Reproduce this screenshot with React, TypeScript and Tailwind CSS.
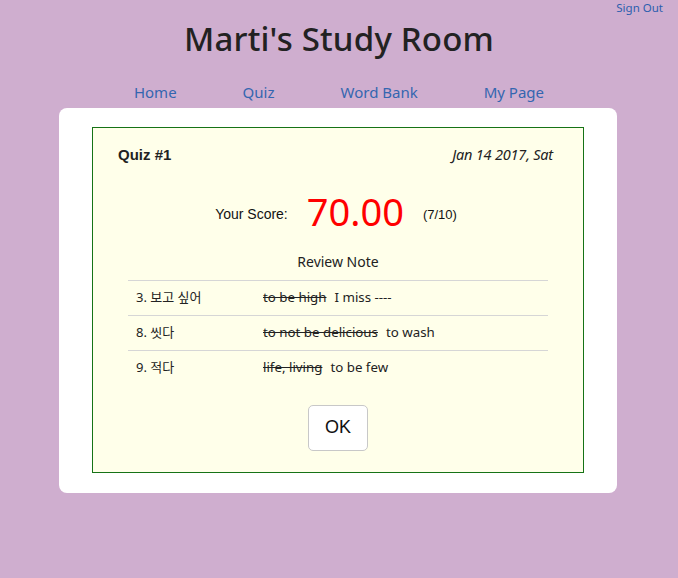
const NOTES = [
  { q: '3. 보고 싶어', wrong: 'to be high', right: 'I miss ----' },
  { q: '8. 씻다', wrong: 'to not be delicious', right: 'to wash' },
  { q: '9. 적다', wrong: 'life, living', right: 'to be few' },
];

const NAV = ['Home', 'Quiz', 'Word Bank', 'My Page'];

export default function App() {
  return (
    <div className="min-h-[578px] bg-[#cfaecf] font-['Noto_Sans',sans-serif]">
      <div className="flex justify-end pr-[15px] h-[20px]">
        <a className="text-[11.5px] leading-[16px] text-[#2c5eae]">Sign Out</a>
      </div>

      <h1 className="text-center text-[33px] leading-[40px] font-medium text-[#222] mt-[-1px] tracking-[0.2px]">
        Marti's Study Room
      </h1>

      <nav className="flex justify-center mt-[22px] h-[24px] text-[15px] text-[#3466b0]">
        {NAV.map(n => <a key={n} className="mx-[33px]">{n}</a>)}
      </nav>

      <div className="mx-[59px] w-[558px] mt-[3px] bg-white rounded-[8px] pt-[19px] pb-[20px] px-[33px]">
        <div className="border border-[#167316] bg-[#ffffea] px-[35px] pt-[16px] pb-[21px]">
          <div className="flex justify-between items-center ml-[-10px] mr-[-5px]">
            <span className="text-[15px] font-bold text-[#222] font-['Liberation_Sans',sans-serif]">Quiz #1</span>
            <span className="text-[14.5px] text-[#222] italic tracking-[-0.2px]">Jan 14 2017, Sat</span>
          </div>

          <div className="flex justify-center items-center mt-[22px] ml-[-4px] font-['Liberation_Sans',sans-serif] text-[#111]">
            <span className="text-[14px] mt-[8px]">Your Score:</span>
            <span className="text-[38px] text-[#ff0000] font-['Noto_Sans',sans-serif] mx-[19px] leading-[44px]">70.00</span>
            <span className="text-[13px] mt-[8px]">(7/10)</span>
          </div>

          <div className="text-center text-[14px] text-[#222] mt-[18px]">Review Note</div>

          <div className="mt-[8px]">
            {NOTES.map(n => (
              <div key={n.q} className="flex items-center h-[35px] border-t border-[#d6d6d6] text-[13.3px] text-[#222]">
                <span className="w-[135px] pl-[8px] text-[13px] font-['Noto_Sans','Noto_Sans_CJK_KR',sans-serif]">{n.q}</span>
                <span className="line-through">{n.wrong}</span>
                <span className="ml-[8px]">{n.right}</span>
              </div>
            ))}
          </div>

          <div className="flex justify-center mt-[20px]">
            <button className="w-[60px] h-[46px] bg-white border border-[#c8c8c8] rounded-[5px] text-[18px] text-[#111] font-['Liberation_Sans',sans-serif]">
              OK
            </button>
          </div>
        </div>
      </div>
    </div>
  );
}
